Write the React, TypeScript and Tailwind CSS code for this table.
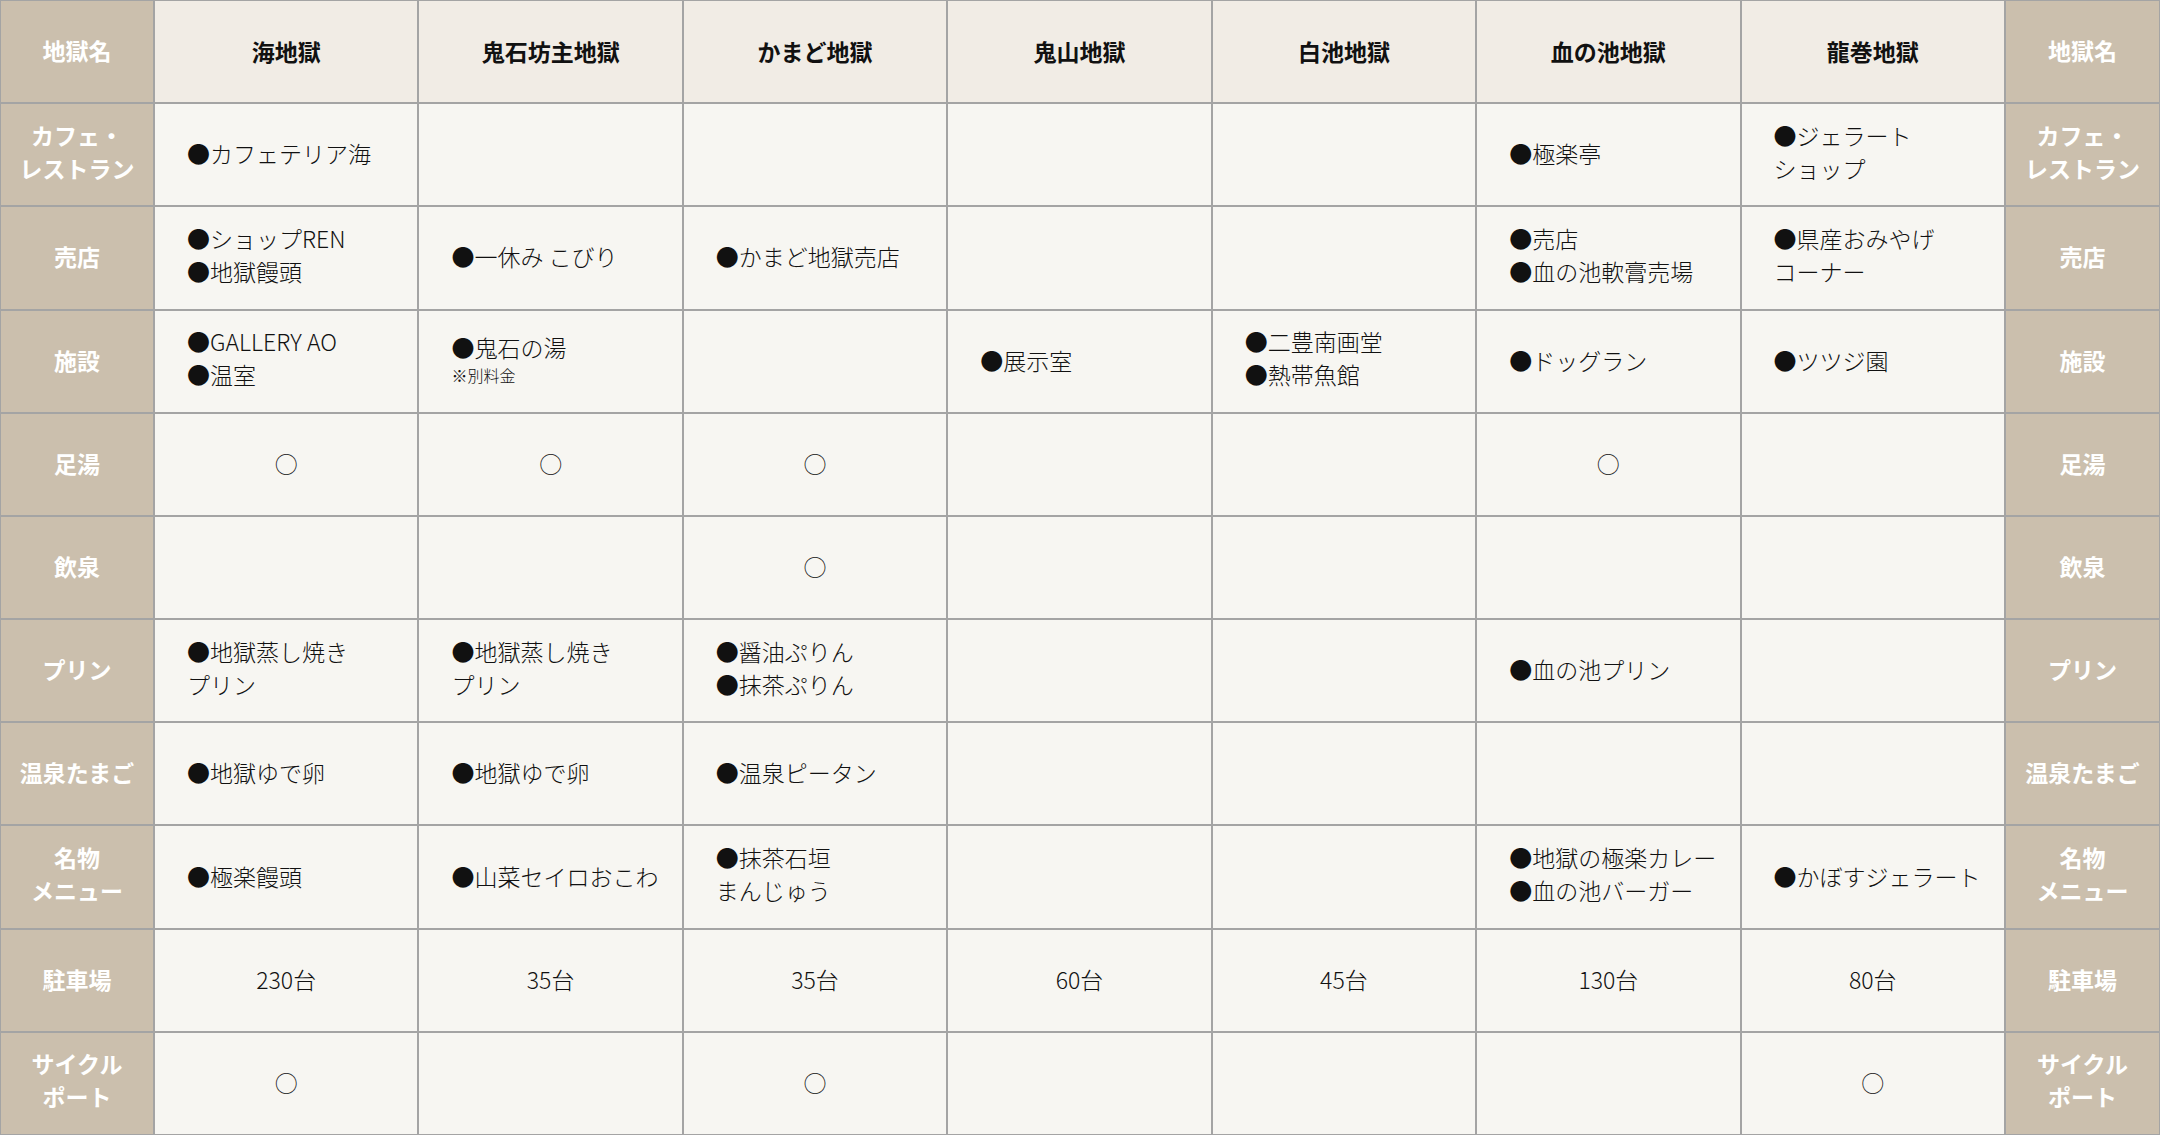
import React from "react";

type Cell =
  | { kind: "empty" }
  | { kind: "circle" }
  | { kind: "center"; text: string }
  | { kind: "list"; lines: string[]; note?: string };

const E: Cell = { kind: "empty" };
const O: Cell = { kind: "circle" };
const L = (lines: string[], note?: string): Cell => ({ kind: "list", lines, note });
const C = (text: string): Cell => ({ kind: "center", text });

const heads = ["海地獄", "鬼石坊主地獄", "かまど地獄", "鬼山地獄", "白池地獄", "血の池地獄", "龍巻地獄"];

const rows: { label: string[]; cells: Cell[] }[] = [
  {
    label: ["カフェ・", "レストラン"],
    cells: [L(["●カフェテリア海"]), E, E, E, E, L(["●極楽亭"]), L(["●ジェラート", "ショップ"])],
  },
  {
    label: ["売店"],
    cells: [
      L(["●ショップREN", "●地獄饅頭"]),
      L(["●一休み こびり"]),
      L(["●かまど地獄売店"]),
      E,
      E,
      L(["●売店", "●血の池軟膏売場"]),
      L(["●県産おみやげ", "コーナー"]),
    ],
  },
  {
    label: ["施設"],
    cells: [
      L(["●GALLERY AO", "●温室"]),
      L(["●鬼石の湯"], "※別料金"),
      E,
      L(["●展示室"]),
      L(["●二豊南画堂", "●熱帯魚館"]),
      L(["●ドッグラン"]),
      L(["●ツツジ園"]),
    ],
  },
  { label: ["足湯"], cells: [O, O, O, E, E, O, E] },
  { label: ["飲泉"], cells: [E, E, O, E, E, E, E] },
  {
    label: ["プリン"],
    cells: [
      L(["●地獄蒸し焼き", "プリン"]),
      L(["●地獄蒸し焼き", "プリン"]),
      L(["●醤油ぷりん", "●抹茶ぷりん"]),
      E,
      E,
      L(["●血の池プリン"]),
      E,
    ],
  },
  {
    label: ["温泉たまご"],
    cells: [L(["●地獄ゆで卵"]), L(["●地獄ゆで卵"]), L(["●温泉ピータン"]), E, E, E, E],
  },
  {
    label: ["名物", "メニュー"],
    cells: [
      L(["●極楽饅頭"]),
      L(["●山菜セイロおこわ"]),
      L(["●抹茶石垣", "まんじゅう"]),
      E,
      E,
      L(["●地獄の極楽カレー", "●血の池バーガー"]),
      L(["●かぼすジェラート"]),
    ],
  },
  {
    label: ["駐車場"],
    cells: [C("230台"), C("35台"), C("35台"), C("60台"), C("45台"), C("130台"), C("80台")],
  },
  { label: ["サイクル", "ポート"], cells: [O, E, O, E, E, E, O] },
];

function Label({ lines }: { lines: string[] }) {
  const multi = lines.length > 1;
  return (
    <div className="bg-[#cbbfad] flex items-center justify-center text-white font-bold text-[23px] leading-[33px]">
      <div className={multi ? "flex flex-col items-center -translate-y-[3px]" : "flex flex-col items-center -translate-y-[1px]"}>
        {lines.map((l, i) => (
          <span key={i} className="whitespace-nowrap">
            {l}
          </span>
        ))}
      </div>
    </div>
  );
}

function Body({ cell }: { cell: Cell }) {
  if (cell.kind === "empty") return <div className="bg-[#f7f6f2]" />;
  if (cell.kind === "circle")
    return (
      <div className="bg-[#f7f6f2] flex items-center justify-center text-[23px] leading-[33px] text-[#111] font-light">
        <span className="-translate-y-[1px]">○</span>
      </div>
    );
  if (cell.kind === "center")
    return (
      <div className="bg-[#f7f6f2] flex items-center justify-center text-[23px] leading-[33px] text-[#111] font-light">
        <span className="-translate-y-[1px]">{cell.text}</span>
      </div>
    );
  const multi = cell.lines.length > 1 || !!cell.note;
  return (
    <div className="bg-[#f7f6f2] flex items-center pl-8 text-[23px] leading-[33px] text-[#111] font-light">
      <div className={multi ? "flex flex-col -translate-y-[3px]" : "flex flex-col -translate-y-[1px]"}>
        {cell.lines.map((l, i) => (
          <span key={i} className="whitespace-nowrap">
            {l}
          </span>
        ))}
        {cell.note && <span className="text-[16px] leading-[22px] whitespace-nowrap">{cell.note}</span>}
      </div>
    </div>
  );
}

export default function App() {
  return (
    <div
      className="w-[2160px] h-[1135px] bg-[#a4a4a4] p-px grid grid-cols-[152px_repeat(7,1fr)_153px] grid-rows-[repeat(11,1fr)] gap-[2px]"
      style={{ fontFamily: '"Noto Sans CJK JP", "Noto Sans", sans-serif' }}
    >
      <Label lines={["地獄名"]} />
      {heads.map((h) => (
        <div
          key={h}
          className="bg-[#f1ece5] flex items-center justify-center font-bold text-[23px] leading-[33px] text-[#111]"
        >
          {h}
        </div>
      ))}
      <Label lines={["地獄名"]} />
      {rows.map((r, ri) => (
        <React.Fragment key={ri}>
          <Label lines={r.label} />
          {r.cells.map((c, ci) => (
            <Body key={ci} cell={c} />
          ))}
          <Label lines={r.label} />
        </React.Fragment>
      ))}
    </div>
  );
}
